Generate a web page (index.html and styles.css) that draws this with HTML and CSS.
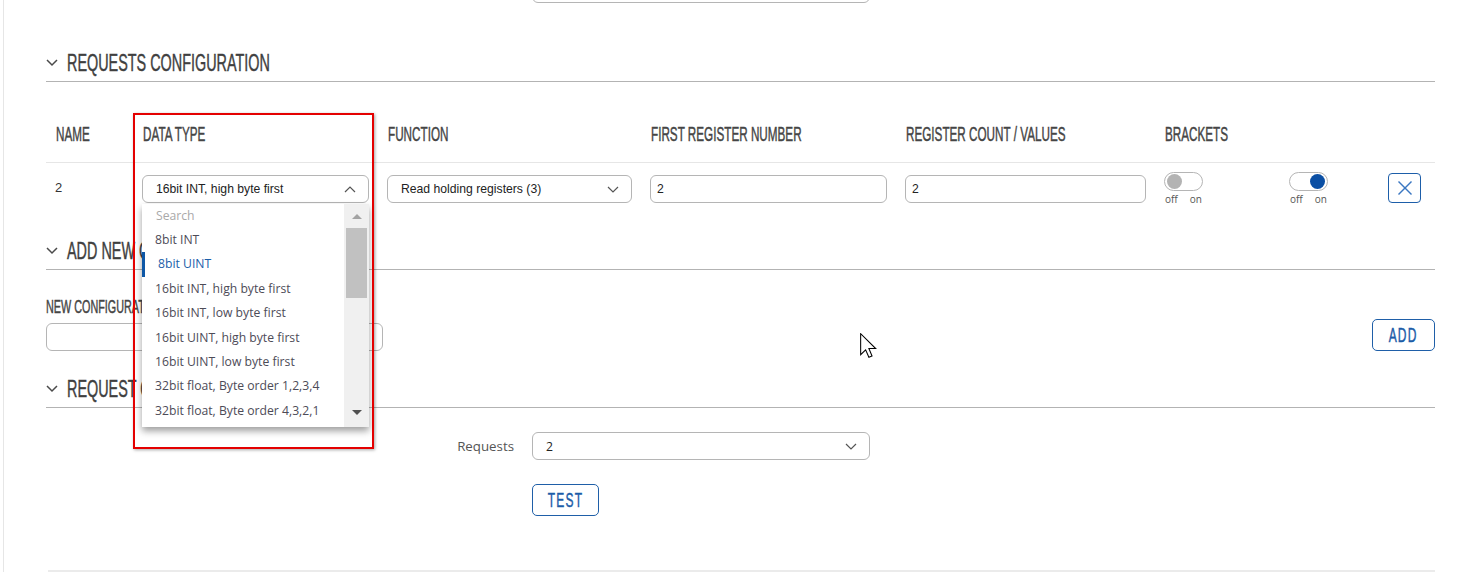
FILE: index.html
```html
<!DOCTYPE html>
<html>
<head>
<meta charset="utf-8">
<title>Requests configuration</title>
<link rel="stylesheet" href="styles.css">
</head>
<body>
<div class="page">
  <div class="top-row"><div class="field top-field"></div></div>

  <section class="section sec1">
    <h2 class="sec-head">
      <svg class="chev" viewBox="0 0 12 8"><polyline points="1,1 6,6 11,1"/></svg>
      <span class="cond sec-title">REQUESTS CONFIGURATION</span>
    </h2>
    <div class="table">
      <div class="grid thead">
        <div class="cell"><span class="cond th">NAME</span></div>
        <div class="cell"><span class="cond th">DATA TYPE</span></div>
        <div class="cell"><span class="cond th">FUNCTION</span></div>
        <div class="cell"><span class="cond th">FIRST REGISTER NUMBER</span></div>
        <div class="cell"><span class="cond th">REGISTER COUNT / VALUES</span></div>
        <div class="cell"><span class="cond th">BRACKETS</span></div>
        <div class="cell"></div>
        <div class="cell"></div>
      </div>
      <div class="grid trow">
        <div class="cell name">2</div>
        <div class="cell dd-cell">
          <div class="select"><span>16bit INT, high byte first</span>
            <svg class="sel-chev" viewBox="0 0 12 7"><polyline points="1,6 6,1 11,6"/></svg>
          </div>
          <div class="dropdown">
            <div class="dd-list">
              <div class="dd-search">Search</div>
              <div class="dd-item">8bit INT</div>
              <div class="dd-item sel">8bit UINT</div>
              <div class="dd-item">16bit INT, high byte first</div>
              <div class="dd-item">16bit INT, low byte first</div>
              <div class="dd-item">16bit UINT, high byte first</div>
              <div class="dd-item">16bit UINT, low byte first</div>
              <div class="dd-item">32bit float, Byte order 1,2,3,4</div>
              <div class="dd-item">32bit float, Byte order 4,3,2,1</div>
            </div>
            <div class="dd-scroll">
              <div class="sb-btn"><span class="tri-up"></span></div>
              <div class="sb-thumb"></div>
              <div class="sb-btn sb-down"><span class="tri-down"></span></div>
            </div>
          </div>
        </div>
        <div class="cell">
          <div class="select"><span>Read holding registers (3)</span>
            <svg class="sel-chev" viewBox="0 0 12 7"><polyline points="1,1 6,6 11,1"/></svg>
          </div>
        </div>
        <div class="cell"><div class="input">2</div></div>
        <div class="cell"><div class="input">2</div></div>
        <div class="cell">
          <div class="tog-wrap">
            <div class="toggle"><span class="knob"></span></div>
            <div class="tog-labels"><span>off</span><span>on</span></div>
          </div>
        </div>
        <div class="cell">
          <div class="tog-wrap">
            <div class="toggle on"><span class="knob"></span></div>
            <div class="tog-labels"><span>off</span><span>on</span></div>
          </div>
        </div>
        <div class="cell">
          <div class="xbtn"><svg viewBox="0 0 16 16"><line x1="1.5" y1="1.5" x2="14.5" y2="14.5"/><line x1="14.5" y1="1.5" x2="1.5" y2="14.5"/></svg></div>
        </div>
      </div>
      <div class="highlight"></div>
    </div>
  </section>

  <section class="section sec2">
    <h2 class="sec-head">
      <svg class="chev" viewBox="0 0 12 8"><polyline points="1,1 6,6 11,1"/></svg>
      <span class="cond sec-title">ADD NEW CONFIGURATION</span>
    </h2>
    <div class="newcfg">
      <div class="newcfg-left">
        <div class="lbl"><span class="cond">NEW CONFIGURATION NAME</span></div>
        <div class="field newinput"></div>
      </div>
      <div class="btn btn-add"><span class="cond">ADD</span></div>
    </div>
  </section>

  <section class="section sec3">
    <h2 class="sec-head">
      <svg class="chev" viewBox="0 0 12 8"><polyline points="1,1 6,6 11,1"/></svg>
      <span class="cond sec-title">REQUEST CONFIGURATION TESTING</span>
    </h2>
    <div class="req-row">
      <div class="req-label">Requests</div>
      <div class="select req-select"><span>2</span>
        <svg class="sel-chev" viewBox="0 0 12 7"><polyline points="1,1 6,6 11,1"/></svg>
      </div>
    </div>
    <div class="btn btn-test"><span class="cond">TEST</span></div>
  </section>

  <div class="bottom-line"></div>
</div>
<svg class="cursor" viewBox="0 0 13 19"><path d="M0.5,0.5 L0.5,16.5 L4.3,12.8 L6.8,18.5 L9.2,17.5 L6.8,11.8 L12,11.8 Z"/></svg>
</body>
</html>
```
FILE: styles.css
```css
* { box-sizing: border-box; margin: 0; padding: 0; }
html { overflow: hidden; background: #fff; }
body {
  margin: 0;
  position: relative;
  height: 572px;
  overflow: hidden;
  font-family: "Liberation Sans", Arial, sans-serif;
  color: #333;
  background: #fff;
}
.page {
  margin-left: 3px;
  border-left: 1px solid #e6e6e6;
  padding: 0 27px 0 42px;
  min-height: 572px;
}
.top-row { margin-top: -25px; padding-left: 486px; }
.field {
  height: 28px;
  border: 1px solid #b5b5b5;
  border-radius: 6px;
  background: #fff;
}
.top-field { width: 338px; }

.cond {
  display: inline-block;
  white-space: nowrap;
  font-family: "Liberation Sans", Arial, sans-serif;
  font-weight: 400;
  -webkit-text-stroke: 0.45px currentColor;
  transform: scaleX(0.6);
  transform-origin: 0 50%;
}

.sec-head {
  height: 34px;
  padding-bottom: 3px;
  border-bottom: 1px solid #b3b3b3;
  display: flex;
  align-items: center;
  font-weight: normal;
}
.chev { width: 12px; height: 8px; margin-right: 9px; flex: none; }
.chev polyline { fill: none; stroke: #4a4a4a; stroke-width: 1.5; }
.sec-title { font-size: 24px; line-height: 30px; color: #3f3f3f; }
.sec1 { margin-top: 45px; }
.sec2 { margin-top: 26px; }
.sec3 { margin-top: 23px; }

.table { position: relative; }
.grid {
  display: grid;
  grid-template-columns: 87px 245px 263px 255px 259px 125px 99px 56px;
}
.cell { padding: 0 9px; }
.thead {
  padding-top: 40px;
  padding-bottom: 16px;
  border-bottom: 1px solid #e6e6e6;
}
.th { font-size: 19.5px; line-height: 24px; color: #454545; margin-left: 1px; }
.trow { padding-top: 12px; height: 47px; }
.name { font-size: 13px; line-height: 26px; color: #333; }

.select, .input {
  height: 28px;
  border: 1px solid #b5b5b5;
  border-radius: 6px;
  background: #fff;
  display: flex;
  align-items: center;
  font-size: 12.2px;
  color: #222;
  white-space: nowrap;
}
.select { padding: 0 12px 0 13px; justify-content: space-between; }
.input { padding-left: 6px; }
.sel-chev { width: 12px; height: 7px; flex: none; }
.sel-chev polyline { fill: none; stroke: #555; stroke-width: 1.2; }

.dd-cell { position: relative; }
.dropdown {
  position: absolute;
  top: 29px;
  left: 9px;
  width: 227px;
  height: 223px;
  background: #fff;
  box-shadow: 0 4px 7px rgba(0, 0, 0, 0.38);
  display: flex;
  z-index: 10;
}
.dd-list {
  flex: 1;
  font-family: "Open Sans", "Liberation Sans", sans-serif;
  font-size: 12.2px;
  color: #4d4b57;
  white-space: nowrap;
  overflow: hidden;
}
.dd-search { height: 24px; line-height: 23px; padding-left: 14px; color: #a9a9a9; }
.dd-item { height: 24.4px; line-height: 24.4px; padding-left: 13px; }
.dd-item.sel { border-left: 3px solid #0e57a6; color: #1b5ea9; }
.dd-scroll {
  width: 25px;
  background: #f0f0f0;
  display: flex;
  flex-direction: column;
  align-items: center;
}
.sb-btn { height: 24px; width: 100%; display: flex; align-items: center; justify-content: center; }
.sb-down { height: 29px; margin-top: auto; }
.tri-up {
  width: 0; height: 0;
  border-left: 5px solid transparent;
  border-right: 5px solid transparent;
  border-bottom: 5px solid #a3a3a3;
}
.tri-down {
  width: 0; height: 0;
  border-left: 5px solid transparent;
  border-right: 5px solid transparent;
  border-top: 5px solid #505050;
}
.sb-thumb { width: 21px; height: 70px; background: #c1c1c1; }

.tog-wrap { margin-top: -3px; display: inline-flex; flex-direction: column; }
.toggle {
  width: 39px;
  height: 19px;
  border: 1px solid #b5b5b5;
  border-radius: 10px;
  display: flex;
  align-items: center;
  padding: 0 2px;
  background: #fff;
}
.toggle.on { justify-content: flex-end; }
.knob { width: 15px; height: 15px; border-radius: 50%; background: #b3b3b3; }
.toggle.on .knob { background: #0b4fa4; }
.tog-labels {
  display: flex;
  gap: 12px;
  padding-left: 1px;
  margin-top: 2px;
  font-family: "Open Sans", "Liberation Sans", sans-serif;
  font-size: 10px;
  line-height: 13px;
  color: #555;
}
.xbtn {
  width: 33px;
  height: 30px;
  margin-top: -2px;
  border: 1px solid #1d5ea9;
  border-radius: 4px;
  display: flex;
  align-items: center;
  justify-content: center;
}
.xbtn svg { width: 16px; height: 16px; }
.xbtn line { stroke: #3a77c1; stroke-width: 1.4; }

.highlight {
  position: absolute;
  top: 31px;
  left: 87px;
  width: 241px;
  height: 336px;
  border: 2px solid #e40000;
  box-shadow: 1px 1px 3px rgba(0, 0, 0, 0.35);
  z-index: 20;
  pointer-events: none;
}

.newcfg {
  display: flex;
  justify-content: space-between;
  align-items: flex-end;
  margin-top: 26px;
}
.lbl { font-size: 18px; line-height: 22px; color: #454545; margin-bottom: 5px; }
.newinput { width: 337px; }

.btn {
  height: 32px;
  border: 1px solid #1f5fa8;
  border-radius: 5px;
  background: #fff;
  color: #1c5ca8;
  display: flex;
  align-items: center;
  justify-content: center;
}
.btn .cond {
  font-size: 20px;
  line-height: 24px;
  letter-spacing: 2px;
  transform-origin: 50% 50%;
}
.btn-add { width: 63px; }
.btn-test { width: 67px; margin-left: 486px; margin-top: 24px; }

.req-row { display: flex; align-items: center; margin-top: 24px; }
.req-label {
  width: 468px;
  margin-right: 18px;
  text-align: right;
  font-family: "Open Sans", "Liberation Sans", sans-serif;
  font-size: 13.3px;
  color: #555;
}
.req-select { width: 338px; font-family: "Open Sans", "Liberation Sans", sans-serif; }

.bottom-line { margin-top: 54px; margin-left: 2px; border-top: 2px solid #ebebeb; }

.cursor {
  position: absolute;
  left: 860px;
  top: 333px;
  width: 17px;
  height: 25px;
  z-index: 30;
}
.cursor path { fill: #fff; stroke: #000; stroke-width: 0.8; stroke-linejoin: miter; }
```
